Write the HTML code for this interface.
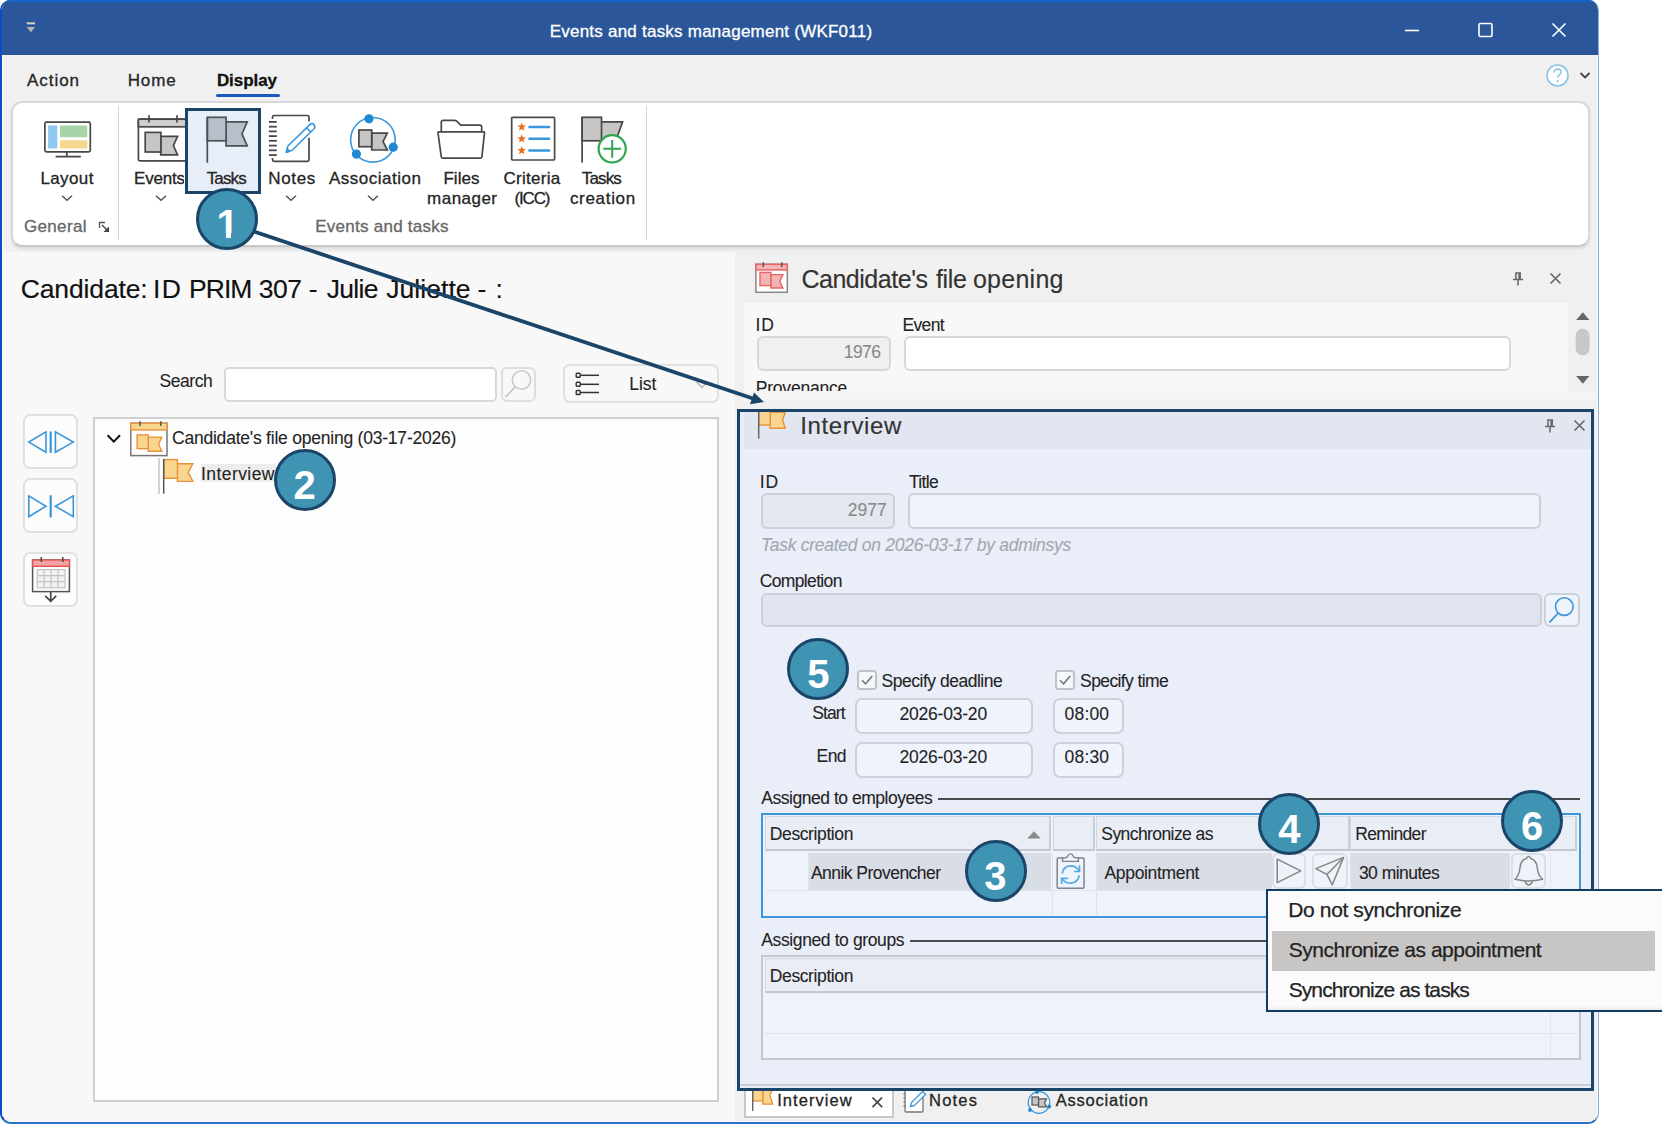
<!DOCTYPE html>
<html><head><meta charset="utf-8"><title>Events and tasks management (WKF011)</title>
<style>
html,body{margin:0;padding:0;background:#fff;}
body{width:1662px;height:1124px;position:relative;overflow:hidden;font-family:"Liberation Sans",sans-serif;}
.b{position:absolute;box-sizing:border-box;}
.t{position:absolute;white-space:nowrap;}
svg{overflow:visible}
</style></head><body>
<div class="b" style="left:0.0px;top:0.0px;width:1599.0px;height:1124.0px;background:#f0f0f0;border-radius:10px 10px 11px 11px;overflow:hidden;border-left:2px solid #0a4cc4;border-right:1px solid #86afe4;border-bottom:2px solid #2a70c8;"><div class="b" style="left:-2px;top:0;width:1599px;height:55px;background:#2b579a;border-top:2px solid #1565c8;"></div><div class="b" style="left:0;top:55px;width:1px;height:1067px;background:#fffdf6;"></div><div class="b" style="left:0;top:1120.6px;width:1597px;height:1.4px;background:#fffdf6;"></div><div class="b" style="left:1595px;top:55px;width:1px;height:1067px;background:#fbf8f2;"></div></div>
<div class="b" style="left:3.0px;top:252.0px;width:732.0px;height:868.6px;background:#f8f8f8;border-radius:0 0 0 9px;"></div>
<span class="t" style="left:549.7px;top:22.0px;font-size:17px;line-height:19px;color:#ffffff;letter-spacing:0.23px;-webkit-text-stroke:0.3px;">Events and tasks management (WKF011)</span>
<svg class="b" style="left:24.0px;top:22.0px;" width="14" height="14" viewBox="0 0 14 14"><path d="M2.7 1.3h8.3" stroke="#d4d0c6" stroke-width="2" fill="none"/><path d="M2.7 5h8.3l-4.15 5.3z" fill="#b9b4a8"/></svg>
<svg class="b" style="left:1400.0px;top:16.0px;" width="180" height="30" viewBox="0 0 180 30"><path d="M5 14.5h14" stroke="#fff" stroke-width="1.6" fill="none"/><rect x="79" y="7.5" width="13" height="13" rx="1.5" stroke="#fff" stroke-width="1.6" fill="none"/><path d="M152.5 7.5l13 13M165.5 7.5l-13 13" stroke="#fff" stroke-width="1.6" fill="none"/></svg>
<span class="t" style="left:27.0px;top:71.0px;font-size:17px;line-height:19px;color:#242424;letter-spacing:0.96px;-webkit-text-stroke:0.3px;">Action</span>
<span class="t" style="left:127.7px;top:71.0px;font-size:17px;line-height:19px;color:#242424;letter-spacing:0.90px;-webkit-text-stroke:0.3px;">Home</span>
<span class="t" style="left:216.9px;top:71.0px;font-size:17px;line-height:19px;color:#111;letter-spacing:-0.05px;-webkit-text-stroke:0.3px;font-weight:bold;">Display</span>
<div class="b" style="left:216.0px;top:93.5px;width:64.0px;height:3.0px;background:#185abd;border-radius:1.5px;"></div>
<svg class="b" style="left:1545.0px;top:63.0px;" width="50" height="26" viewBox="0 0 50 26"><circle cx="12.5" cy="12.5" r="10.5" fill="#fff" stroke="#8cc3e6" stroke-width="1.6"/><path d="M9 9.5c0-2.2 1.6-3.4 3.5-3.4s3.5 1.2 3.5 3.1c0 2.6-3.4 2.6-3.4 5.4" stroke="#8cc3e6" stroke-width="1.6" fill="none"/><circle cx="12.6" cy="18.2" r="1.1" fill="#8cc3e6"/><path d="M35.5 10l4.5 4.5 4.5-4.5" stroke="#444" stroke-width="1.8" fill="none"/></svg>
<div class="b" style="left:11.0px;top:101.0px;width:1579.0px;height:146.0px;background:#fff;border:2px solid #d8d8d8;border-bottom-color:#c9c9c9;border-radius:11px;box-shadow:0 2px 3px rgba(0,0,0,.09);"></div>
<div class="b" style="left:118.0px;top:106.0px;width:1.3px;height:134.0px;background:#d2d2d2;"></div>
<div class="b" style="left:646.0px;top:106.0px;width:1.3px;height:134.0px;background:#d2d2d2;"></div>
<div class="b" style="left:185.0px;top:107.5px;width:76.0px;height:86.0px;background:#e8eef8;border:3px solid #1b4568;"></div>
<span class="t" style="left:40.4px;top:169.0px;font-size:17px;line-height:19px;color:#242424;letter-spacing:0.40px;-webkit-text-stroke:0.3px;">Layout</span>
<span class="t" style="left:134.1px;top:169.0px;font-size:17px;line-height:19px;color:#242424;letter-spacing:0.00px;-webkit-text-stroke:0.3px;width:49.5px;overflow:hidden;letter-spacing:-0.2px;">Events</span>
<span class="t" style="left:206.7px;top:169.0px;font-size:17px;line-height:19px;color:#242424;letter-spacing:-0.85px;-webkit-text-stroke:0.3px;">Tasks</span>
<span class="t" style="left:268.3px;top:169.0px;font-size:17px;line-height:19px;color:#242424;letter-spacing:0.65px;-webkit-text-stroke:0.3px;">Notes</span>
<span class="t" style="left:329.0px;top:169.0px;font-size:17px;line-height:19px;color:#242424;letter-spacing:0.50px;-webkit-text-stroke:0.3px;">Association</span>
<span class="t" style="left:443.4px;top:169.0px;font-size:17px;line-height:19px;color:#242424;letter-spacing:0.05px;-webkit-text-stroke:0.3px;">Files</span>
<span class="t" style="left:427.1px;top:189.0px;font-size:17px;line-height:19px;color:#242424;letter-spacing:0.47px;-webkit-text-stroke:0.3px;">manager</span>
<span class="t" style="left:503.5px;top:169.0px;font-size:17px;line-height:19px;color:#242424;letter-spacing:0.29px;-webkit-text-stroke:0.3px;">Criteria</span>
<span class="t" style="left:514.6px;top:189.0px;font-size:17px;line-height:19px;color:#242424;letter-spacing:-1.20px;-webkit-text-stroke:0.3px;">(ICC)</span>
<span class="t" style="left:581.8px;top:169.0px;font-size:17px;line-height:19px;color:#242424;letter-spacing:-0.87px;-webkit-text-stroke:0.3px;">Tasks</span>
<span class="t" style="left:569.9px;top:189.0px;font-size:17px;line-height:19px;color:#242424;letter-spacing:0.69px;-webkit-text-stroke:0.3px;">creation</span>
<span class="t" style="left:24.0px;top:217.0px;font-size:17px;line-height:19px;color:#666;letter-spacing:0.33px;-webkit-text-stroke:0.3px;">General</span>
<span class="t" style="left:315.2px;top:217.0px;font-size:17px;line-height:19px;color:#666;letter-spacing:0.26px;-webkit-text-stroke:0.3px;">Events and tasks</span>
<svg class="b" style="left:58.5px;top:191.5px;" width="16" height="12" viewBox="0 0 16 12"><path d="M3 3.75L8 8.25L13 3.75" stroke="#555" stroke-width="1.5" fill="none"/></svg>
<svg class="b" style="left:152.8px;top:191.5px;" width="16" height="12" viewBox="0 0 16 12"><path d="M3 3.75L8 8.25L13 3.75" stroke="#555" stroke-width="1.5" fill="none"/></svg>
<svg class="b" style="left:283.3px;top:191.5px;" width="16" height="12" viewBox="0 0 16 12"><path d="M3 3.75L8 8.25L13 3.75" stroke="#555" stroke-width="1.5" fill="none"/></svg>
<svg class="b" style="left:364.6px;top:191.5px;" width="16" height="12" viewBox="0 0 16 12"><path d="M3 3.75L8 8.25L13 3.75" stroke="#555" stroke-width="1.5" fill="none"/></svg>
<svg class="b" style="left:98.0px;top:221.0px;" width="13" height="13" viewBox="0 0 13 13"><path d="M1.5 7V1.5H7" stroke="#555" stroke-width="1.3" fill="none"/><path d="M4 4l6 6" stroke="#444" stroke-width="1.4"/><path d="M11 5.5V11H5.5z" fill="#444"/></svg>
<svg class="b" style="left:40.0px;top:115.0px;" width="60" height="50" viewBox="0 0 60 50"><rect x="4.9" y="7.2" width="45.4" height="29.6" rx="1.5" fill="#fff" stroke="#484848" stroke-width="1.7"/>
<rect x="8.1" y="10.5" width="9.2" height="23" fill="#8ec8ef"/><rect x="20" y="10.5" width="27.3" height="11.7" fill="#a8d5a8"/><rect x="20" y="25.3" width="27.3" height="8.2" fill="#f7d78b"/>
<path d="M26.8 37v4.5M15.6 41.7h25.2" stroke="#484848" stroke-width="1.7" fill="none"/></svg>
<svg class="b" style="left:134.0px;top:112.0px;overflow:hidden;" width="51" height="54" viewBox="0 0 51 54"><rect x="4.4" y="7.2" width="50" height="41.6" rx="1.5" fill="#fff" stroke="#484848" stroke-width="1.7"/>
<rect x="4.4" y="7.2" width="50" height="7.6" fill="#d2d0ce" stroke="#484848" stroke-width="1.7"/>
<path d="M15 3.2v7.4M43 3.2v7.4" stroke="#484848" stroke-width="1.7"/>
<path d="M26.7 24.3H43.6L39.4 33.6L43.6 42.9H26.7z" fill="#c8c6c4" stroke="#484848" stroke-width="1.7"/>
<rect x="11.2" y="20.4" width="15.7" height="19.6" fill="#c8c6c4" stroke="#484848" stroke-width="1.7"/></svg>
<svg class="b" style="left:205.0px;top:115.0px;" width="50" height="50" viewBox="0 0 50 50"><path d="M21 6.9H42.2L37 18.9L42.2 30.9H21z" fill="#b9bfc9" stroke="#4a5058" stroke-width="1.7"/>
<rect x="2.3" y="2.3" width="18.8" height="23.5" fill="#b9bfc9" stroke="#4a5058" stroke-width="1.7"/>
<path d="M2.3 2.3V47.8" stroke="#4a5058" stroke-width="1.7"/></svg>
<svg class="b" style="left:268.0px;top:115.0px;" width="50" height="50" viewBox="0 0 50 50"><path d="M0.9 6.9h7.9" stroke="#484848" stroke-width="1.8"/><path d="M0.9 11.7h7.9" stroke="#484848" stroke-width="1.8"/><path d="M0.9 16.4h7.9" stroke="#484848" stroke-width="1.8"/><path d="M0.9 21.1h7.9" stroke="#484848" stroke-width="1.8"/><path d="M0.9 25.8h7.9" stroke="#484848" stroke-width="1.8"/><path d="M0.9 30.6h7.9" stroke="#484848" stroke-width="1.8"/><path d="M0.9 35.3h7.9" stroke="#484848" stroke-width="1.8"/><path d="M0.9 40.1h7.9" stroke="#484848" stroke-width="1.8"/><path d="M4.5 4V2Q4.5 0.5 6 0.5H39.5Q41 0.5 41 2V6.4M41 22.7V44.8Q41 46.3 39.5 46.3H6Q4.5 46.3 4.5 44.8V43" fill="none" stroke="#484848" stroke-width="1.7"/>
<g fill="none" stroke="#3a96da" stroke-width="1.6" stroke-linejoin="round"><path d="M18.3 37.2L19.9 31L41.8 9.6Q44 7.6 46 9.6Q47.8 11.6 46 13.8L24.2 35.2z"/><path d="M38.5 12.7L43 17.2"/><path d="M18.3 37.2L21.5 36.2L19.2 33.9z" fill="#3a96da"/></g></svg>
<svg class="b" style="left:348.0px;top:115.0px;" width="50" height="50" viewBox="0 0 50 50"><circle cx="24.9" cy="24.8" r="22.3" fill="none" stroke="#3a96da" stroke-width="1.6"/>
<circle cx="21" cy="3.8" r="4.6" fill="#1e88d2"/><circle cx="45.2" cy="32.2" r="4.6" fill="#1e88d2"/><circle cx="8.4" cy="39.1" r="4.6" fill="#1e88d2"/>
<path d="M23.7 18.1H39.3L35 26.5L39.3 35H23.7z" fill="#c8c6c4" stroke="#484848" stroke-width="1.7"/>
<rect x="10.9" y="15" width="12.8" height="16.7" fill="#c8c6c4" stroke="#484848" stroke-width="1.7"/></svg>
<svg class="b" style="left:436.0px;top:115.0px;" width="52" height="50" viewBox="0 0 52 50"><path d="M5.3 16.8V7Q5.3 5.3 7 5.3H18.5Q19.6 5.3 20.5 6L24.7 10.2H44Q45.7 10.2 45.7 12V16.8" fill="#fff" stroke="#484848" stroke-width="1.7"/>
<path d="M2.6 16.8H47.8Q48.6 16.8 48.5 17.8L45.9 41.8Q45.7 43.2 44.3 43.2H7Q5.5 43.2 5.3 41.8L2 17.8Q1.9 16.8 2.6 16.8z" fill="#fff" stroke="#484848" stroke-width="1.7"/></svg>
<svg class="b" style="left:510.0px;top:115.0px;" width="50" height="50" viewBox="0 0 50 50"><rect x="1.7" y="2.3" width="42.9" height="42.7" rx="1" fill="#fff" stroke="#484848" stroke-width="1.7"/><polygon points="11.70,7.40 12.84,10.44 16.07,10.58 13.54,12.60 14.40,15.72 11.70,13.93 9.00,15.72 9.86,12.60 7.33,10.58 10.56,10.44" fill="#e8701a"/><path d="M19.4 12H39.1" stroke="#3a96da" stroke-width="2.4" stroke-linecap="round"/><polygon points="11.70,19.20 12.84,22.24 16.07,22.38 13.54,24.40 14.40,27.52 11.70,25.73 9.00,27.52 9.86,24.40 7.33,22.38 10.56,22.24" fill="#e8701a"/><path d="M19.4 23.8H39.1" stroke="#3a96da" stroke-width="2.4" stroke-linecap="round"/><polygon points="11.70,30.90 12.84,33.94 16.07,34.08 13.54,36.10 14.40,39.22 11.70,37.43 9.00,39.22 9.86,36.10 7.33,34.08 10.56,33.94" fill="#e8701a"/><path d="M19.4 35.5H39.1" stroke="#3a96da" stroke-width="2.4" stroke-linecap="round"/></svg>
<svg class="b" style="left:580.0px;top:115.0px;" width="50" height="50" viewBox="0 0 50 50"><path d="M21 6.9H42.6L37.5 21L39 30.9H21z" fill="#c8c6c4" stroke="#484848" stroke-width="1.7"/>
<rect x="2.1" y="2.3" width="19.4" height="23.5" fill="#c8c6c4" stroke="#484848" stroke-width="1.7"/>
<path d="M2.1 2.3V47.8" stroke="#484848" stroke-width="1.7"/>
<circle cx="32.2" cy="33.8" r="13.6" fill="#fff" stroke="#2ea650" stroke-width="2.2"/><path d="M23.3 33.8H41.1M32.2 24.9V42.7" stroke="#2ea650" stroke-width="2"/></svg>
<span class="t" style="left:20.7px;top:274.0px;font-size:26.5px;line-height:30px;color:#111;letter-spacing:-0.13px;-webkit-text-stroke:0.15px;">Candidate: </span>
<span class="t" style="left:152.9px;top:274.0px;font-size:26.5px;line-height:30px;color:#111;letter-spacing:1.50px;-webkit-text-stroke:0.15px;">ID </span>
<span class="t" style="left:188.9px;top:274.0px;font-size:26.5px;line-height:30px;color:#111;letter-spacing:-0.90px;-webkit-text-stroke:0.15px;">PRIM </span>
<span class="t" style="left:258.7px;top:274.0px;font-size:26.5px;line-height:30px;color:#111;letter-spacing:-0.40px;-webkit-text-stroke:0.15px;">307 </span>
<span class="t" style="left:308.8px;top:274.0px;font-size:26.5px;line-height:30px;color:#111;letter-spacing:0.00px;-webkit-text-stroke:0.15px;">- </span>
<span class="t" style="left:326.7px;top:274.0px;font-size:26.5px;line-height:30px;color:#111;letter-spacing:-0.68px;-webkit-text-stroke:0.15px;">Julie </span>
<span class="t" style="left:386.3px;top:274.0px;font-size:26.5px;line-height:30px;color:#111;letter-spacing:0.04px;-webkit-text-stroke:0.15px;">Juliette </span>
<span class="t" style="left:477.6px;top:274.0px;font-size:26.5px;line-height:30px;color:#111;letter-spacing:0.00px;-webkit-text-stroke:0.15px;">- </span>
<span class="t" style="left:495.5px;top:274.0px;font-size:26.5px;line-height:30px;color:#111;letter-spacing:0.00px;-webkit-text-stroke:0.15px;">: </span>
<span class="t" style="left:159.6px;top:371.0px;font-size:17.5px;line-height:20px;color:#242424;letter-spacing:-0.48px;-webkit-text-stroke:0.1px;">Search</span>
<div class="b" style="left:224.4px;top:366.7px;width:273.1px;height:35.3px;background:#fff;border:2px solid #d8d8d8;border-radius:5px;"></div>
<div class="b" style="left:500.8px;top:366.7px;width:35.2px;height:35.3px;background:#f8f8f8;border:2px solid #dedede;border-radius:6px;"></div>
<svg class="b" style="left:503.0px;top:369.0px;" width="32" height="32" viewBox="0 0 32 32"><circle cx="18.5" cy="11" r="9.2" fill="none" stroke="#c8c8c8" stroke-width="1.6"/><path d="M12.2 17.8L2.5 28.2" stroke="#c8c8c8" stroke-width="1.8"/></svg>
<div class="b" style="left:563.4px;top:364.4px;width:155.2px;height:38.8px;background:#f8f8f8;border:2px solid #e0e0e0;border-radius:7px;"></div>
<svg class="b" style="left:574.5px;top:370.0px;" width="26" height="28" viewBox="0 0 26 28"><rect x="1.2" y="3.3" width="4" height="4" rx="0.8" fill="none" stroke="#333" stroke-width="1.4"/><path d="M5.2 5.3H24" stroke="#333" stroke-width="1.5"/><rect x="1.2" y="12.3" width="4" height="4" rx="0.8" fill="none" stroke="#333" stroke-width="1.4"/><path d="M5.2 14.3H24" stroke="#333" stroke-width="1.5"/><rect x="1.2" y="20.5" width="4" height="4" rx="0.8" fill="none" stroke="#333" stroke-width="1.4"/><path d="M5.2 22.5H24" stroke="#333" stroke-width="1.5"/></svg>
<span class="t" style="left:629.3px;top:374.0px;font-size:17.5px;line-height:20px;color:#242424;letter-spacing:-0.07px;-webkit-text-stroke:0.1px;">List</span>
<svg class="b" style="left:695.0px;top:381.0px;" width="14" height="8" viewBox="0 0 14 8"><path d="M1.5 1L7 6.5L12.5 1" fill="none" stroke="#b5b5b5" stroke-width="1.5"/></svg>
<div class="b" style="left:22.5px;top:413.8px;width:55.5px;height:55.3px;background:#fcfcfc;border:2px solid #e0e0e0;border-radius:7px;"></div>
<div class="b" style="left:22.5px;top:477.9px;width:55.5px;height:55.3px;background:#fcfcfc;border:2px solid #e0e0e0;border-radius:7px;"></div>
<div class="b" style="left:22.5px;top:551.7px;width:55.5px;height:55.3px;background:#fcfcfc;border:2px solid #e0e0e0;border-radius:7px;"></div>
<svg class="b" style="left:22.5px;top:413.8px;" width="56" height="56" viewBox="0 0 56 56"><g fill="none" stroke="#3a96da" stroke-width="1.6" stroke-linejoin="miter"><path d="M23 17.9V38.3L5.8 28.1z"/><path d="M32.4 17.9V38.3L50.3 28.1z"/></g><path d="M27.7 17.5V38.9" stroke="#3a96da" stroke-width="2.2"/></svg>
<svg class="b" style="left:22.5px;top:477.9px;" width="56" height="56" viewBox="0 0 56 56"><g fill="none" stroke="#3a96da" stroke-width="1.6"><path d="M5.8 17.8V38.7L23 28.2z"/><path d="M50.3 17.8V38.7L32.4 28.2z"/></g><path d="M27.7 17.3V39.5" stroke="#3a96da" stroke-width="2.2"/></svg>
<svg class="b" style="left:22.5px;top:551.7px;" width="56" height="56" viewBox="0 0 56 56"><rect x="9.6" y="8" width="36.8" height="31.6" fill="#fff" stroke="#555" stroke-width="1.5"/><rect x="9.6" y="8" width="36.8" height="6.3" fill="#f6a3a3" stroke="#e25555" stroke-width="1.4"/><path d="M18.3 5V10M39.8 5V10" stroke="#444" stroke-width="1.5"/><rect x="14.2" y="17.6" width="27.8" height="18.2" fill="#f2f2f2" stroke="#c4c4c4" stroke-width="1.2"/><path d="M14.2 23.6H42M14.2 29.7H42M21.2 17.6V35.8M28.1 17.6V35.8M35 17.6V35.8" stroke="#c4c4c4" stroke-width="1.2" fill="none"/><path d="M27.7 40V49M22.2 43.8L27.7 49.3L33.2 43.8" fill="none" stroke="#444" stroke-width="1.7"/></svg>
<div class="b" style="left:92.8px;top:417.0px;width:625.8px;height:685.3px;background:#fdfdfd;border:2px solid #cfcfcf;"></div>
<svg class="b" style="left:105.0px;top:432.0px;" width="18" height="14" viewBox="0 0 18 14"><path d="M2.6 3.2L8.8 9.6L15 3.2" fill="none" stroke="#111" stroke-width="2"/></svg>
<svg class="b" style="left:129.0px;top:419.0px;" width="42" height="40" viewBox="0 0 42 40"><rect x="1.8" y="4.2" width="36.2" height="32.4" fill="#fff" stroke="#777" stroke-width="1.5"/><rect x="1.8" y="4.2" width="36.2" height="6.7" fill="#f9d68f" stroke="#e8923a" stroke-width="1.4"/>
<path d="M10.9 2.2V7M31.8 2.2V7" stroke="#555" stroke-width="1.5"/>
<path d="M19.3 18.1H32.8L29.6 25.2L32.8 32.2H19.3z" fill="#f9d68f" stroke="#e8923a" stroke-width="1.4"/><rect x="8.1" y="15.9" width="11.2" height="13.7" fill="#f9d68f" stroke="#e8923a" stroke-width="1.4"/></svg>
<div class="b" style="left:158.3px;top:458.0px;width:1.5px;height:36.0px;background:#d4d4d4;"></div>
<svg class="b" style="left:162.6px;top:459.2px;" width="32" height="35.6" viewBox="0 0 32 35.6"><path d="M14.4 4.7H29.9L25.2 13.5L29.9 22.4H14.4z" fill="#f9d68f" stroke="#e8923a" stroke-width="1.4"/><rect x="0.7" y="0.6" width="13.7" height="18.7" fill="#f9d68f" stroke="#e8923a" stroke-width="1.4"/><path d="M0.7 0V34.6" stroke="#555" stroke-width="1.5"/></svg>
<div class="b" style="left:200.7px;top:464.4px;width:75.3px;height:17.9px;background:#ececec;"></div>
<span class="t" style="left:172.0px;top:428.0px;font-size:17.5px;line-height:20px;color:#242424;letter-spacing:-0.22px;-webkit-text-stroke:0.1px;">Candidate&#x27;s file opening (03-17-2026)</span>
<span class="t" style="left:201.0px;top:464.0px;font-size:17.5px;line-height:20px;color:#242424;letter-spacing:0.43px;-webkit-text-stroke:0.1px;">Interview</span>
<svg class="b" style="left:753.0px;top:260.0px;" width="38" height="36" viewBox="0 0 38 36"><rect x="2.9" y="4.3" width="31.4" height="28" fill="#fff" stroke="#888" stroke-width="1.5"/><rect x="2.9" y="4.3" width="31.4" height="5.6" fill="#f4b4b4" stroke="#e86464" stroke-width="1.5"/>
<path d="M10.3 2.2V7M28.8 2.2V7" stroke="#555" stroke-width="1.5"/>
<path d="M17.9 14.6H29.9L26.7 21.3L29.9 28H17.9z" fill="#f4b4b4" stroke="#e86464" stroke-width="1.4"/><rect x="7" y="12.4" width="10.9" height="13.2" fill="#f4b4b4" stroke="#e86464" stroke-width="1.4"/></svg>
<span class="t" style="left:801.4px;top:265.0px;font-size:25px;line-height:28px;color:#333;letter-spacing:-0.47px;-webkit-text-stroke:0.15px;">Candidate&#x27;s </span>
<span class="t" style="left:935.9px;top:265.0px;font-size:25px;line-height:28px;color:#333;letter-spacing:-0.30px;-webkit-text-stroke:0.15px;">file </span>
<span class="t" style="left:972.9px;top:265.0px;font-size:25px;line-height:28px;color:#333;letter-spacing:0.27px;-webkit-text-stroke:0.15px;">opening </span>
<svg class="b" style="left:1512.3px;top:271.8px;" width="12" height="14" viewBox="0 0 12 14"><path d="M3.2 1H9M3.9 1V7M8.2 1V7M7.1 1V7M1 7.6H11M6 7.6V13.5" fill="none" stroke="#666" stroke-width="1.5"/></svg>
<svg class="b" style="left:1550.3px;top:272.8px;" width="11" height="11" viewBox="0 0 11 11"><path d="M0.5 0.5L10.5 10.5M10.5 0.5L0.5 10.5" stroke="#666" stroke-width="1.6"/></svg>
<div class="b" style="left:743.6px;top:303.0px;width:824.9px;height:88.0px;background:#f8f8f8;overflow:hidden;"></div>
<span class="t" style="left:755.6px;top:315.0px;font-size:17.5px;line-height:20px;color:#242424;letter-spacing:0.70px;-webkit-text-stroke:0.1px;">ID</span>
<span class="t" style="left:902.6px;top:315.0px;font-size:17.5px;line-height:20px;color:#242424;letter-spacing:-0.70px;-webkit-text-stroke:0.1px;">Event</span>
<div class="b" style="left:757.0px;top:336.2px;width:134.0px;height:34.6px;background:#f0f0f0;border:2px solid #d8d8d8;border-radius:6px;"></div>
<span class="t" style="left:843.7px;top:342.0px;font-size:17.5px;line-height:20px;color:#8a8a8a;letter-spacing:-0.53px;-webkit-text-stroke:0.1px;">1976</span>
<div class="b" style="left:903.9px;top:336.2px;width:606.8px;height:34.6px;background:#fff;border:2px solid #d8d8d8;border-radius:6px;"></div>
<div class="b" style="left:743.6px;top:376px;width:400px;height:15px;overflow:hidden;">
<span class="t" style="left:12.2px;top:2.0px;font-size:17.5px;line-height:20px;color:#242424;letter-spacing:-0.22px;-webkit-text-stroke:0.1px;">Provenance</span>
</div>
<svg class="b" style="left:1568.5px;top:303.0px;" width="26" height="88" viewBox="0 0 26 88"><path d="M7.2 17L13.8 9.3L20.4 17z" fill="#666"/><rect x="6.7" y="25.8" width="13.9" height="26.7" rx="6.9" fill="#c8c8c8"/><path d="M7.2 73L13.8 80.7L20.4 73z" fill="#666"/></svg>
<div class="b" style="left:743.6px;top:391.0px;width:851.4px;height:10.0px;background:#f4f4f4;"></div>
<div class="b" style="left:738.5px;top:411.0px;width:854.5px;height:678.0px;background:#e9eef8;"></div>
<div class="b" style="left:744.0px;top:411.0px;width:849.0px;height:37.8px;background:#e1e6f0;"></div>
<div class="b" style="left:750px;top:411px;width:45px;height:32px;overflow:hidden;">
<svg class="b" style="left:8.3px;top:-5.7px;" width="32" height="35" viewBox="0 0 32 35"><path d="M12.2 7.3H27.2L24.6 15.3L27.2 23.3H12.2z" fill="#f9d68f" stroke="#e8923a" stroke-width="1.4"/><rect x="0.7" y="-3" width="11.5" height="23" fill="#f9d68f" stroke="#e8923a" stroke-width="1.4"/><path d="M0.7 0V33.6" stroke="#666" stroke-width="1.5"/></svg>
</div>
<span class="t" style="left:800.2px;top:412.0px;font-size:24px;line-height:27px;color:#333;letter-spacing:0.64px;-webkit-text-stroke:0.15px;">Interview</span>
<svg class="b" style="left:1543.5px;top:418.6px;" width="12" height="14" viewBox="0 0 12 14"><path d="M3.2 1H9M3.9 1V7M8.2 1V7M7.1 1V7M1 7.6H11M6 7.6V13.5" fill="none" stroke="#666" stroke-width="1.5"/></svg>
<svg class="b" style="left:1573.5px;top:420.0px;" width="11" height="11" viewBox="0 0 11 11"><path d="M0.5 0.5L10.5 10.5M10.5 0.5L0.5 10.5" stroke="#666" stroke-width="1.6"/></svg>
<span class="t" style="left:759.7px;top:472.0px;font-size:17.5px;line-height:20px;color:#242424;letter-spacing:0.90px;-webkit-text-stroke:0.1px;">ID</span>
<span class="t" style="left:908.9px;top:472.0px;font-size:17.5px;line-height:20px;color:#242424;letter-spacing:-0.65px;-webkit-text-stroke:0.1px;">Title</span>
<div class="b" style="left:761.3px;top:493.3px;width:134.0px;height:35.3px;background:#e3e7f0;border:2px solid #cbd0da;border-radius:6px;"></div>
<span class="t" style="left:847.8px;top:500.0px;font-size:17.5px;line-height:20px;color:#8a8a8a;letter-spacing:-0.00px;-webkit-text-stroke:0.1px;">2977</span>
<div class="b" style="left:908.3px;top:493.3px;width:632.3px;height:35.3px;background:#eff4fc;border:2px solid #cbd0da;border-radius:6px;"></div>
<span class="t" style="left:760.9px;top:535.0px;font-size:17.5px;line-height:20px;color:#a3a7af;letter-spacing:-0.27px;-webkit-text-stroke:0.1px;font-style:italic;">Task created on 2026-03-17 by adminsys</span>
<span class="t" style="left:759.8px;top:571.0px;font-size:17.5px;line-height:20px;color:#242424;letter-spacing:-0.66px;-webkit-text-stroke:0.1px;">Completion</span>
<div class="b" style="left:761.3px;top:592.6px;width:780.3px;height:34.3px;background:#dfe4ee;border:2px solid #cbd0da;border-radius:6px;"></div>
<div class="b" style="left:1544.4px;top:592.6px;width:35.4px;height:34.3px;background:#eff4fc;border:2px solid #cbd0da;border-radius:6px;"></div>
<svg class="b" style="left:1546.0px;top:594.0px;" width="32" height="32" viewBox="0 0 32 32"><circle cx="18.3" cy="12.6" r="8.8" fill="none" stroke="#3a96da" stroke-width="1.6"/><path d="M12.2 19L3.5 28.4" stroke="#3a96da" stroke-width="1.8"/></svg>
<div class="b" style="left:856.5px;top:670.2px;width:20.3px;height:19.6px;background:#f4f7fc;border:2px solid #bfc2c8;border-radius:3.5px;"></div>
<svg class="b" style="left:856.5px;top:670.2px;" width="20" height="20" viewBox="0 0 20 20"><path d="M5 10.2L8.6 13.8L15.2 6" fill="none" stroke="#777" stroke-width="1.6"/></svg>
<div class="b" style="left:1054.9px;top:670.2px;width:20.3px;height:19.6px;background:#f4f7fc;border:2px solid #bfc2c8;border-radius:3.5px;"></div>
<svg class="b" style="left:1054.9px;top:670.2px;" width="20" height="20" viewBox="0 0 20 20"><path d="M5 10.2L8.6 13.8L15.2 6" fill="none" stroke="#777" stroke-width="1.6"/></svg>
<span class="t" style="left:881.6px;top:671.0px;font-size:17.5px;line-height:20px;color:#242424;letter-spacing:-0.49px;-webkit-text-stroke:0.1px;">Specify deadline</span>
<span class="t" style="left:1080.1px;top:671.0px;font-size:17.5px;line-height:20px;color:#242424;letter-spacing:-0.61px;-webkit-text-stroke:0.1px;">Specify time</span>
<span class="t" style="left:812.3px;top:703.0px;font-size:17.5px;line-height:20px;color:#242424;letter-spacing:-0.93px;-webkit-text-stroke:0.1px;">Start</span>
<span class="t" style="left:816.6px;top:746.0px;font-size:17.5px;line-height:20px;color:#242424;letter-spacing:-0.60px;-webkit-text-stroke:0.1px;">End</span>
<div class="b" style="left:855.0px;top:698.0px;width:178.0px;height:36.0px;background:#eff4fc;border:2px solid #cbd0da;border-radius:7px;"></div>
<div class="b" style="left:1053.0px;top:698.0px;width:71.0px;height:36.0px;background:#eff4fc;border:2px solid #cbd0da;border-radius:7px;"></div>
<span class="t" style="left:899.5px;top:704.0px;font-size:17.5px;line-height:20px;color:#242424;letter-spacing:-0.21px;-webkit-text-stroke:0.1px;">2026-03-20</span>
<span class="t" style="left:1064.6px;top:704.0px;font-size:17.5px;line-height:20px;color:#242424;letter-spacing:0.17px;-webkit-text-stroke:0.1px;">08:00</span>
<div class="b" style="left:855.0px;top:742.0px;width:178.0px;height:36.0px;background:#eff4fc;border:2px solid #cbd0da;border-radius:7px;"></div>
<div class="b" style="left:1053.0px;top:742.0px;width:71.0px;height:36.0px;background:#eff4fc;border:2px solid #cbd0da;border-radius:7px;"></div>
<span class="t" style="left:899.5px;top:747.0px;font-size:17.5px;line-height:20px;color:#242424;letter-spacing:-0.21px;-webkit-text-stroke:0.1px;">2026-03-20</span>
<span class="t" style="left:1064.6px;top:747.0px;font-size:17.5px;line-height:20px;color:#242424;letter-spacing:0.17px;-webkit-text-stroke:0.1px;">08:30</span>
<span class="t" style="left:761.3px;top:788.0px;font-size:17.5px;line-height:20px;color:#242424;letter-spacing:-0.47px;-webkit-text-stroke:0.1px;">Assigned to employees</span>
<div class="b" style="left:938.4px;top:797.6px;width:641.2px;height:2.0px;background:#4a4a4a;"></div>
<span class="t" style="left:761.3px;top:930.0px;font-size:17.5px;line-height:20px;color:#242424;letter-spacing:-0.39px;-webkit-text-stroke:0.1px;">Assigned to groups</span>
<div class="b" style="left:910.3px;top:940.0px;width:669.3px;height:2.0px;background:#4a4a4a;"></div>
<div class="b" style="left:760.8px;top:812.6px;width:819.8px;height:105.4px;background:#eef3fb;border:2px solid #3c96d8;"></div>
<div class="b" style="left:764.8px;top:816.0px;width:286.2px;height:35.3px;background:#e9eef6;border:1px solid #d2d6de;border-right:2px solid #c9cdd6;border-bottom:2px solid #c3c7d0;"></div>
<div class="b" style="left:1052.6px;top:816.0px;width:42.4px;height:35.3px;background:#e9eef6;border:1px solid #d2d6de;border-right:2px solid #c9cdd6;border-bottom:2px solid #c3c7d0;"></div>
<div class="b" style="left:1096.4px;top:816.0px;width:253.6px;height:35.3px;background:#e9eef6;border:1px solid #d2d6de;border-right:2px solid #c9cdd6;border-bottom:2px solid #c3c7d0;"></div>
<div class="b" style="left:1350.3px;top:816.0px;width:199.4px;height:35.3px;background:#e9eef6;border:1px solid #d2d6de;border-right:2px solid #c9cdd6;border-bottom:2px solid #c3c7d0;"></div>
<div class="b" style="left:1549.7px;top:816.0px;width:27.3px;height:35.3px;background:#e9eef6;border:1px solid #d2d6de;border-right:2px solid #c9cdd6;border-bottom:2px solid #c3c7d0;"></div>
<div class="b" style="left:808.5px;top:853.0px;width:242.5px;height:37.0px;background:#d9dde6;"></div>
<div class="b" style="left:1096.4px;top:853.0px;width:175.6px;height:37.0px;background:#d9dde6;"></div>
<div class="b" style="left:1350.3px;top:853.0px;width:160.2px;height:37.0px;background:#d9dde6;"></div>
<div class="b" style="left:1051.5px;top:853.0px;width:1.2px;height:63.0px;background:#dfe3ea;"></div>
<div class="b" style="left:1095.6px;top:853.0px;width:1.2px;height:63.0px;background:#dfe3ea;"></div>
<div class="b" style="left:1349.8px;top:853.0px;width:1.2px;height:63.0px;background:#dfe3ea;"></div>
<div class="b" style="left:1549.6px;top:853.0px;width:1.2px;height:63.0px;background:#dfe3ea;"></div>
<div class="b" style="left:764.8px;top:890.0px;width:813.2px;height:1.2px;background:#dfe3ea;"></div>
<div class="b" style="left:807.6px;top:853.0px;width:1.0px;height:37.0px;background:#dfe3ea;"></div>
<span class="t" style="left:769.8px;top:824.0px;font-size:17.5px;line-height:20px;color:#242424;letter-spacing:-0.39px;-webkit-text-stroke:0.1px;">Description</span>
<svg class="b" style="left:1027.0px;top:831.0px;" width="14" height="8" viewBox="0 0 14 8"><path d="M0.3 7.4L7 0.2L13.7 7.4z" fill="#8a8a8a"/></svg>
<span class="t" style="left:1101.3px;top:824.0px;font-size:17.5px;line-height:20px;color:#242424;letter-spacing:-0.58px;-webkit-text-stroke:0.1px;">Synchronize as</span>
<span class="t" style="left:1355.3px;top:824.0px;font-size:17.5px;line-height:20px;color:#242424;letter-spacing:-0.67px;-webkit-text-stroke:0.1px;">Reminder</span>
<span class="t" style="left:810.9px;top:863.0px;font-size:17.5px;line-height:20px;color:#242424;letter-spacing:-0.53px;-webkit-text-stroke:0.1px;">Annik Provencher</span>
<span class="t" style="left:1104.5px;top:863.0px;font-size:17.5px;line-height:20px;color:#242424;letter-spacing:-0.33px;-webkit-text-stroke:0.1px;">Appointment</span>
<span class="t" style="left:1358.9px;top:863.0px;font-size:17.5px;line-height:20px;color:#242424;letter-spacing:-0.52px;-webkit-text-stroke:0.1px;">30 minutes</span>
<svg class="b" style="left:1056.0px;top:853.0px;" width="30" height="37" viewBox="0 0 30 37"><rect x="1.2" y="4.9" width="26.8" height="30.4" rx="1.2" fill="#eff4fc" stroke="#7d828c" stroke-width="1.5"/>
<path d="M6.6 4.9H9.2Q11.2 4.9 11.8 3Q12.6 0.9 14.5 0.9Q16.4 0.9 17.2 3Q17.8 4.9 19.8 4.9H22.4V8.4H6.6z" fill="#eff4fc" stroke="#7d828c" stroke-width="1.4" stroke-linejoin="round"/>
<g fill="none" stroke="#55a8e4" stroke-width="1.7"><path d="M6.2 20.6Q7.2 13.2 14.6 12.8Q19.6 12.8 23 17.6"/><path d="M23.5 12.3V18.5H18"/><path d="M23.3 22.4Q22 29.6 14.6 30.2Q9.6 30.2 6.2 26"/><path d="M5.6 31V25.4H12"/></g></svg>
<div class="b" style="left:1272.4px;top:853.3px;width:34.0px;height:35.7px;background:#eef2f9;border:2px solid #dadee6;border-radius:6px;"></div>
<div class="b" style="left:1312.0px;top:853.3px;width:36.0px;height:35.7px;background:#eef2f9;border:2px solid #dadee6;border-radius:6px;"></div>
<div class="b" style="left:1510.6px;top:853.3px;width:35.4px;height:35.7px;background:#eef2f9;border:2px solid #dadee6;border-radius:6px;"></div>
<svg class="b" style="left:1272.4px;top:853.3px;" width="34" height="36" viewBox="0 0 34 36"><path d="M5.2 6.2V29.7L28.8 17.9z" fill="none" stroke="#858585" stroke-width="1.5" stroke-linejoin="round"/></svg>
<svg class="b" style="left:1312.0px;top:853.3px;" width="36" height="36" viewBox="0 0 36 36"><path d="M31.5 4.4L3.8 15.6L14.9 21.4L20.3 31.8z" fill="none" stroke="#858585" stroke-width="1.5" stroke-linejoin="round"/><path d="M31.5 4.4L14.9 21.4" stroke="#858585" stroke-width="1.5"/></svg>
<svg class="b" style="left:1510.6px;top:853.3px;" width="36" height="36" viewBox="0 0 36 36"><path d="M4 26.3C8 22.5 8.6 19 9 14.5C9.4 9.5 12 6.3 15.6 5.4Q15.9 3.4 17.6 3.4Q19.3 3.4 19.6 5.4C23.2 6.3 25.8 9.5 26.2 14.5C26.6 19 27.2 22.5 31.6 26.3Q17.6 29.6 4 26.3z" fill="none" stroke="#858585" stroke-width="1.5" stroke-linejoin="round"/><path d="M13.8 28.4Q17.6 35.6 21.6 28.4" fill="none" stroke="#858585" stroke-width="1.5"/></svg>
<div class="b" style="left:760.8px;top:954.6px;width:819.8px;height:105.0px;background:#eef3fb;border:2px solid #c3c7d0;"></div>
<div class="b" style="left:764.8px;top:958.0px;width:784.9px;height:34.8px;background:#e9eef6;border:1px solid #d2d6de;border-right:2px solid #c9cdd6;border-bottom:2px solid #c3c7d0;"></div>
<div class="b" style="left:1549.7px;top:958.0px;width:27.3px;height:34.8px;background:#e9eef6;border:1px solid #d2d6de;border-right:2px solid #c9cdd6;border-bottom:2px solid #c3c7d0;"></div>
<div class="b" style="left:764.8px;top:1032.6px;width:813.2px;height:1.2px;background:#dfe3ea;"></div>
<div class="b" style="left:1549.6px;top:993.0px;width:1.2px;height:65.0px;background:#dfe3ea;"></div>
<span class="t" style="left:769.8px;top:966.0px;font-size:17.5px;line-height:20px;color:#242424;letter-spacing:-0.39px;-webkit-text-stroke:0.1px;">Description</span>
<div class="b" style="left:740.0px;top:1083.5px;width:851.3px;height:2.1px;background:#c9cdd6;"></div>
<div class="b" style="left:744.1px;top:1089.0px;width:149.9px;height:28.5px;background:#fff;border:2px solid #c8c8c8;border-top:none;"></div>
<div class="b" style="left:748px;top:1090.6px;width:30px;height:24px;overflow:hidden;">
<svg class="b" style="left:3.8px;top:-6.6px;" width="24" height="30" viewBox="0 0 24 30"><path d="M10.8 4H20.8L17.8 11.5L20.8 20.2H10.8z" fill="#f9d68f" stroke="#e8923a" stroke-width="1.3"/><rect x="0.7" y="0" width="10.1" height="17" fill="#f9d68f" stroke="#e8923a" stroke-width="1.3"/><path d="M0.7 0V27" stroke="#666" stroke-width="1.4"/></svg>
</div>
<span class="t" style="left:777.2px;top:1091.0px;font-size:16.5px;line-height:18px;color:#242424;letter-spacing:1.07px;-webkit-text-stroke:0.3px;">Interview</span>
<svg class="b" style="left:872.3px;top:1096.5px;" width="10.6" height="10.6" viewBox="0 0 10.6 10.6"><path d="M0.5 0.5L10.1 10.1M10.1 0.5L0.5 10.1" stroke="#444" stroke-width="1.7"/></svg>
<div class="b" style="left:900px;top:1090.6px;width:30px;height:24px;overflow:hidden;">
<svg class="b" style="left:3.0px;top:-2.0px;" width="24" height="26" viewBox="0 0 24 26"><rect x="2" y="0.5" width="18" height="22.5" rx="1" fill="#fff" stroke="#777" stroke-width="1.3"/><path d="M0.3 5H3M0.3 9H3M0.3 13H3M0.3 17H3" stroke="#777" stroke-width="1"/><path d="M7.5 17.5L8.5 13.5L19.5 2.5L22.5 5.5L11.5 16.5z" fill="#fff" stroke="#3a96da" stroke-width="1.3"/></svg>
</div>
<span class="t" style="left:929.1px;top:1091.0px;font-size:16.5px;line-height:18px;color:#242424;letter-spacing:1.18px;-webkit-text-stroke:0.3px;">Notes</span>
<svg class="b" style="left:1026.0px;top:1089.0px;" width="26" height="26" viewBox="0 0 26 26"><circle cx="13" cy="13.5" r="10.8" fill="none" stroke="#3a96da" stroke-width="1.2"/><circle cx="11" cy="3" r="1.9" fill="#1e88d2"/><circle cx="23.2" cy="17.5" r="1.9" fill="#1e88d2"/><circle cx="4" cy="21" r="1.9" fill="#1e88d2"/><path d="M12.5 9.8H20.5L18.5 13.8L20.5 17.8H12.5z" fill="#c8c6c4" stroke="#555" stroke-width="1.2"/><rect x="6" y="8" width="6.5" height="8" fill="#c8c6c4" stroke="#555" stroke-width="1.2"/></svg>
<span class="t" style="left:1055.7px;top:1091.0px;font-size:16.5px;line-height:18px;color:#242424;letter-spacing:0.79px;-webkit-text-stroke:0.3px;">Association</span>
<div class="b" style="left:736.8px;top:409.2px;width:857.6px;height:681.4px;border:3.2px solid #1b4568;"></div>
<div class="b" style="left:1266.2px;top:889.2px;width:403.8px;height:123.2px;background:#fbfbfb;border:2px solid #123c60;box-shadow:inset -2px -2px 3px rgba(0,0,0,.07);"></div>
<div class="b" style="left:1272.4px;top:931.3px;width:383.1px;height:39.5px;background:#c8c6c5;"></div>
<span class="t" style="left:1288.3px;top:898.0px;font-size:21px;line-height:23px;color:#222;letter-spacing:-0.38px;-webkit-text-stroke:0.25px;">Do not synchronize</span>
<span class="t" style="left:1288.7px;top:938.0px;font-size:21px;line-height:23px;color:#222;letter-spacing:-0.48px;-webkit-text-stroke:0.25px;">Synchronize as appointment</span>
<span class="t" style="left:1288.7px;top:978.0px;font-size:21px;line-height:23px;color:#222;letter-spacing:-0.91px;-webkit-text-stroke:0.25px;">Synchronize as tasks</span>
<svg class="b" style="left:0.0px;top:0.0px;pointer-events:none;" width="1662" height="1124" viewBox="0 0 1662 1124"><path d="M254 231.6L753 398.5" stroke="#1b4568" stroke-width="3.8" fill="none"/><path d="M764 402L750 404.2L754 392.4z" fill="#1b4568"/></svg>
<div class="b" style="left:195.7px;top:188.4px;width:62.0px;height:62.0px;background:#3f93b3;border:3.3px solid #1b4568;border-radius:50%;"></div>
<span class="t" style="left:216.4px;top:202.0px;font-size:40px;line-height:44px;color:#fff;letter-spacing:0.00px;-webkit-text-stroke:0.15px;font-weight:bold;-webkit-text-stroke:0;">1</span>
<div class="b" style="left:217.5px;top:232.8px;width:8.2px;height:7.2px;background:#3f93b3;"></div>
<div class="b" style="left:231.4px;top:232.8px;width:8.1px;height:7.2px;background:#3f93b3;"></div>
<div class="b" style="left:273.5px;top:449.1px;width:62.0px;height:62.0px;background:#3f93b3;border:3.3px solid #1b4568;border-radius:50%;"></div>
<span class="t" style="left:293.5px;top:463.0px;font-size:40px;line-height:44px;color:#fff;letter-spacing:0.00px;-webkit-text-stroke:0.15px;font-weight:bold;-webkit-text-stroke:0;">2</span>
<div class="b" style="left:964.6px;top:839.6px;width:62.0px;height:62.0px;background:#3f93b3;border:3.3px solid #1b4568;border-radius:50%;"></div>
<span class="t" style="left:984.3px;top:854.0px;font-size:40px;line-height:44px;color:#fff;letter-spacing:0.00px;-webkit-text-stroke:0.15px;font-weight:bold;-webkit-text-stroke:0;">3</span>
<div class="b" style="left:1258.2px;top:793.2px;width:62.0px;height:62.0px;background:#3f93b3;border:3.3px solid #1b4568;border-radius:50%;"></div>
<span class="t" style="left:1278.3px;top:807.0px;font-size:40px;line-height:44px;color:#fff;letter-spacing:0.00px;-webkit-text-stroke:0.15px;font-weight:bold;-webkit-text-stroke:0;">4</span>
<div class="b" style="left:787.0px;top:637.8px;width:62.0px;height:62.0px;background:#3f93b3;border:3.3px solid #1b4568;border-radius:50%;"></div>
<span class="t" style="left:807.2px;top:652.0px;font-size:40px;line-height:44px;color:#fff;letter-spacing:0.00px;-webkit-text-stroke:0.15px;font-weight:bold;-webkit-text-stroke:0;">5</span>
<div class="b" style="left:1501.2px;top:789.8px;width:62.0px;height:62.0px;background:#3f93b3;border:3.3px solid #1b4568;border-radius:50%;"></div>
<span class="t" style="left:1521.0px;top:804.0px;font-size:40px;line-height:44px;color:#fff;letter-spacing:0.00px;-webkit-text-stroke:0.15px;font-weight:bold;-webkit-text-stroke:0;">6</span>
</body></html>
